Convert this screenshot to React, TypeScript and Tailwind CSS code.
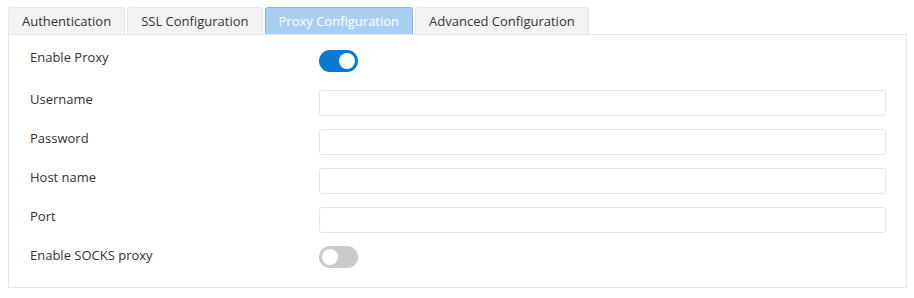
import { useState } from 'react'

const tabs = ['Authentication', 'SSL Configuration', 'Proxy Configuration', 'Advanced Configuration']

function Toggle({ on, onChange, className = '' }: { on: boolean; onChange: () => void; className?: string }) {
  return (
    <button
      type="button"
      onClick={onChange}
      className={`relative h-[22px] w-[39px] rounded-full ${on ? 'bg-[#0b78d6]' : 'bg-[#cacaca]'} ${className}`}
    >
      <span
        className={`absolute top-[3px] h-[16px] w-[16px] rounded-full bg-white ${on ? 'left-[20px]' : 'left-[3px]'}`}
      />
    </button>
  )
}

function Field({ label }: { label: string }) {
  return (
    <div className="flex items-start mb-[13px]">
      <label className="w-[289px] shrink-0 leading-[18px]">{label}</label>
      <input className="h-[26px] flex-1 rounded-[3px] border border-[#e6e6e6] bg-white px-2 text-[13px] outline-none" />
    </div>
  )
}

export default function App() {
  const [active, setActive] = useState(2)
  const [proxy, setProxy] = useState(true)
  const [socks, setSocks] = useState(false)

  return (
    <div className="bg-white px-[8px] pt-[7px] text-[13px] text-[#333] w-[914px] h-[298px]" style={{ fontFamily: '"Open Sans", "Noto Sans", sans-serif' }}>
      <div className="flex gap-[2px]">
        {tabs.map((t, i) => (
          <button
            key={t}
            onClick={() => setActive(i)}
            className={`h-[27px] rounded-t-[3px] border border-b-0 px-[13px] leading-[25px] ${
              i === active
                ? 'border-[#7db6ee] bg-[#a9d0f4] text-white'
                : 'border-[#e8e8e8] bg-[#f3f3f3] text-[#333]'
            }`}
          >
            {t}
          </button>
        ))}
      </div>
      <div className="w-[899px] border border-[#e6e6e6] pl-[21px] pr-[20px] pt-[13px] pb-[19px]">
        <div className="flex items-start mb-[18px]">
          <label className="w-[289px] shrink-0 leading-[18px]">Enable Proxy</label>
          <Toggle on={proxy} onChange={() => setProxy(!proxy)} className="mt-[2px]" />
        </div>
        <Field label="Username" />
        <Field label="Password" />
        <Field label="Host name" />
        <Field label="Port" />
        <div className="flex items-start">
          <label className="w-[289px] shrink-0 leading-[18px]">Enable SOCKS proxy</label>
          <Toggle on={socks} onChange={() => setSocks(!socks)} />
        </div>
      </div>
    </div>
  )
}
